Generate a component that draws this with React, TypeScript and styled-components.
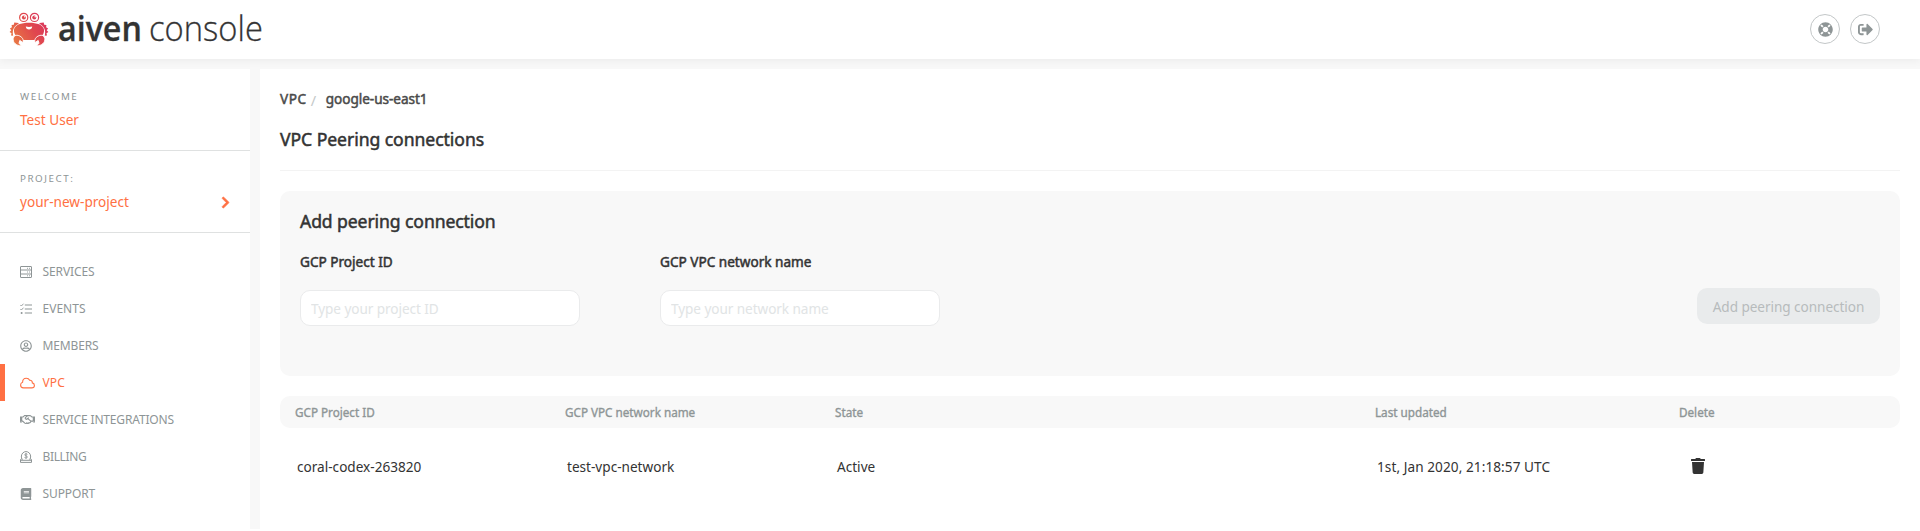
import React from 'react';
import styled, { createGlobalStyle, css } from 'styled-components';
import {
  FaBook,
  FaChevronRight,
  FaLifeRing,
  FaRegHandshake,
  FaRegUserCircle,
  FaSignOutAlt,
  FaTrash,
} from 'react-icons/fa';

const ink = '#333333';
const muted = '#8e9596';
const accent = '#ff7043';
const panel = '#f8f8f8';

const GlobalStyle = createGlobalStyle`
  * { box-sizing: border-box; }
  body {
    margin: 0;
    background: #fff;
    color: ${ink};
    font-family: "Noto Sans", "Open Sans", sans-serif;
    font-size: 13.6px;
  }
`;

const semiBold = css`
  font-weight: 400;
  -webkit-text-stroke: 0.5px currentColor;
`;

const Page = styled.div`
  display: flex;
  flex-direction: column;
  height: 529px;
  background: ${panel};
`;

const Header = styled.header`
  display: flex;
  justify-content: space-between;
  align-items: center;
  height: 59px;
  margin-bottom: 10px;
  padding: 0 40px 1px 9px;
  background: #fff;
  box-shadow: 0 2px 8px rgba(0, 0, 0, 0.05);
`;

const Brand = styled.div`
  display: flex;
  align-items: center;
  height: 58px;
`;

const Wordmark = styled.div`
  display: flex;
  width: 212px;
  margin: 0 0 3px 9px;
  font-family: "Open Sans", "Noto Sans", sans-serif;
  font-size: 35px;
  line-height: 48px;
  white-space: nowrap;
`;

const BrandName = styled.span`
  width: 93px;
  font-weight: 600;
  -webkit-text-stroke: 0.3px currentColor;
  transform: scaleX(0.92);
  transform-origin: left;
`;

const ProductName = styled.span`
  font-weight: 300;
  -webkit-text-stroke: 0.3px currentColor;
  transform: scaleX(0.935);
  transform-origin: left;
`;

const HeaderActions = styled.div`
  display: flex;
  gap: 10px;
`;

const RoundButton = styled.button`
  display: flex;
  align-items: center;
  justify-content: center;
  width: 30px;
  height: 30px;
  padding: 0;
  border: 1px solid #c3c7c8;
  border-radius: 50%;
  background: #fff;
  color: ${muted};
  font-size: 15px;
`;

const Body = styled.div`
  display: flex;
  flex: 1;
  gap: 10px;
  min-height: 0;
`;

const Sidebar = styled.aside`
  width: 250px;
  background: #fff;
`;

const SideBlock = styled.section`
  height: 82px;
  padding: 18px 20px 0;
  border-bottom: 1px solid #dfe1e1;
`;

const SideCaption = styled.div`
  color: ${muted};
  font-size: 9.8px;
  line-height: 20px;
  letter-spacing: 1.55px;
`;

const SideValue = styled.div`
  display: flex;
  align-items: center;
  justify-content: space-between;
  padding-top: 2px;
  color: ${accent};
  line-height: 22px;
  svg {
    margin-right: -2px;
    stroke: currentColor;
    stroke-width: 26px;
  }
`;

const Nav = styled.nav`
  padding-top: 20px;
`;

const NavItem = styled.a<{ $active?: boolean; $spacing: number }>`
  display: flex;
  align-items: center;
  height: 37px;
  padding-left: ${(p) => (p.$active ? 15 : 20)}px;
  border-left: ${(p) => (p.$active ? `5px solid ${accent}` : '0')};
  color: ${(p) => (p.$active ? accent : muted)};
  font-size: 12px;
  letter-spacing: ${(p) => p.$spacing}px;
`;

const NavIcon = styled.span`
  display: flex;
  width: 22.5px;
`;

const Main = styled.main`
  flex: 1;
  padding: 20px 20px 0;
  background: #fff;
`;

const Breadcrumb = styled.div`
  display: flex;
  height: 20px;
  color: #4a4a4a;
  line-height: 20px;
`;

const Crumb = styled.span`
  ${semiBold}
  &:first-child { letter-spacing: 0.6px; }
  &:last-child { letter-spacing: -0.05px; }
`;

const Separator = styled.span`
  width: 15px;
  margin: 1px 0 0 4px;
  color: #c4c8c8;
  font-size: 14.5px;
`;

const Title = styled.h1`
  ${semiBold}
  height: 62px;
  margin: 0 0 20px;
  padding-top: 17px;
  border-bottom: 1px solid #f3f3f3;
  font-size: 17.6px;
  line-height: 27px;
  letter-spacing: -0.06px;
`;

const Panel = styled.section`
  height: 185px;
  padding: 17px 20px 0;
  border-radius: 10px;
  background: ${panel};
`;

const PanelTitle = styled.h2`
  ${semiBold}
  margin: 0 0 15px;
  font-size: 17.6px;
  line-height: 27px;
  letter-spacing: -0.1px;
`;

const Form = styled.form`
  display: flex;
  gap: 80px;
`;

const Field = styled.label`
  display: block;
  width: 280px;
`;

const FieldLabel = styled.div`
  ${semiBold}
  margin-bottom: 17px;
  padding-top: 1px;
  line-height: 22px;
`;

const Input = styled.input`
  display: block;
  width: 280px;
  height: 36px;
  padding: 0 10px;
  border: 1px solid #eaebec;
  border-radius: 10px;
  background: #fff;
  font: inherit;
  letter-spacing: -0.07px;
  &::placeholder { color: #e1e4e5; opacity: 1; }
`;

const SubmitButton = styled.button`
  width: 183px;
  height: 36px;
  margin: 38px 0 0 auto;
  padding: 0;
  border: 0;
  border-radius: 10px;
  background: #e9ebec;
  color: #b7bbbc;
  font: inherit;
  letter-spacing: -0.06px;
`;

const columns = css`
  display: grid;
  grid-template-columns: 270px 270px 540px 304px 1fr;
  align-items: center;
`;

const TableHead = styled.div`
  ${columns}
  ${semiBold}
  -webkit-text-stroke-width: 0.35px;
  height: 32px;
  margin-top: 20px;
  padding-left: 15px;
  border-radius: 10px;
  background: ${panel};
  color: ${muted};
  font-size: 11.7px;
`;

const TableRow = styled.div`
  ${columns}
  height: 76px;
  padding-left: 17px;
`;

const DateCell = styled.span`
  letter-spacing: 0.07px;
`;

const DeleteCell = styled.span`
  display: flex;
  padding-left: 8.5px;
  font-size: 16px;
`;

const CrabLogo = () => (
  <svg width="40" height="34" viewBox="0 0 40 34">
    <defs>
      <linearGradient id="crab" x1="0" y1="34" x2="40" y2="8" gradientUnits="userSpaceOnUse">
        <stop offset="0.1" stopColor="#e97b43" />
        <stop offset="0.6" stopColor="#e0484e" />
        <stop offset="1" stopColor="#d93262" />
      </linearGradient>
    </defs>
    <g fill="none" stroke="url(#crab)" strokeWidth="1.2">
      <circle cx="14.7" cy="5.4" r="4.1" />
      <circle cx="25.5" cy="5.4" r="4.1" />
    </g>
    <g fill="url(#crab)">
      <circle cx="14.9" cy="5.5" r="2" />
      <circle cx="25.3" cy="5.5" r="2" />
      <path d="M20 10.8C28 10.8 34 12.8 35 17.4C35.6 21.7 32 26 27 28H13C8 26 4.4 21.7 5 17.4C6 12.8 12 10.8 20 10.8Z" />
      <path d="M9.5 11L5.3 10.6L4.8 12.7L2.6 13.1L2.9 15.3L0.9 16.5L2.3 18.3L0.6 20L2.5 21.3L2 23.6L4.2 23.8C3.2 19 3.8 15 9.5 11.8Z" />
      <path d="M30.5 11L34.7 10.6L35.2 12.7L37.4 13.1L37.1 15.3L39.1 16.5L37.7 18.3L39.4 20L37.5 21.3L38 23.6L35.8 23.8C36.8 19 36.2 15 30.5 11.8Z" />
    </g>
    <g fill="url(#crab)" stroke="#fff" strokeWidth="0.9">
      <path d="M12.4 33.8C7 33.9 3.6 30.2 4.2 26.5C4.7 23.6 7.2 22.6 9.8 23.6C13 24.8 15 27.4 13.9 30.5L10.8 28.4L10 31.2Z" />
      <path d="M27.6 33.8C33 33.9 36.4 30.2 35.8 26.5C35.3 23.6 32.8 22.6 30.2 23.6C27 24.8 25 27.4 26.1 30.5L29.2 28.4L30 31.2Z" />
    </g>
    <path d="M16.8 14.6C19 15.2 21 15.2 23.2 14.6C23 16.8 21.8 17.6 20 17.6C18.2 17.6 17 16.8 16.8 14.6Z" fill="#fff" />
    <circle cx="15.8" cy="4.7" r="0.8" fill="#fff" />
    <circle cx="26.2" cy="4.7" r="0.8" fill="#fff" />
  </svg>
);

const ServerIcon = () => (
  <svg width="12" height="12" viewBox="0 0 12 12" fill="none" stroke="currentColor">
    <rect x="0.5" y="0.5" width="11" height="11" rx="0.4" />
    <path d="M0.5 4H11.5M0.5 8H11.5" />
    <path d="M7 2.3H8M9 2.3H10M7 6H8M9 6H10M7 9.8H8M9 9.8H10" strokeWidth="0.9" />
  </svg>
);

const TasksIcon = () => (
  <svg width="12" height="12" viewBox="0 0 12 12" fill="none" stroke="currentColor">
    <path d="M4.8 2H12M4.8 6H12M4.8 10H12" strokeWidth="1.1" />
    <path d="M0.3 1.9L1.4 3L3.5 0.7M0.3 5.9L1.4 7L3.5 4.7" strokeWidth="0.9" />
    <circle cx="1.6" cy="10" r="1" fill="currentColor" stroke="none" />
  </svg>
);

const CloudIcon = () => (
  <svg width="15" height="12" viewBox="0 0 15 12" fill="none" stroke="currentColor" strokeWidth="1.1">
    <path d="M3.4 10.9H11.8C13.4 10.9 14.4 9.8 14.4 8.4C14.4 7.1 13.5 6.1 12.3 5.9C12.5 4.2 11.2 3 9.7 3.3C9 1.9 7.7 1.2 6.3 1.2C4.1 1.2 2.6 2.9 2.6 5.2C1.3 5.6 0.6 6.7 0.6 8C0.6 9.6 1.8 10.9 3.4 10.9Z" />
  </svg>
);

const BillingIcon = () => (
  <svg width="12" height="12" viewBox="0 0 12 12" fill="none" stroke="currentColor">
    <path d="M2.6 8.6C1.6 7.6 1.3 6.4 1.4 5C1.6 2.5 3.6 0.6 6 0.6C8.4 0.6 10.4 2.5 10.6 5C10.7 6.4 10.4 7.6 9.4 8.6" />
    <path d="M7.4 3.3C6.6 2.7 4.7 2.7 4.7 3.9C4.7 5.1 7.4 4.6 7.4 6C7.4 7.2 5.3 7.2 4.5 6.5M6 2V7.8" strokeWidth="0.9" />
    <path d="M2 7.8H1.2L0.5 9V11.4H11.5V9L10.8 7.8H10M0.5 9.3H11.5" />
  </svg>
);

const navItems = [
  { label: 'SERVICES', icon: <ServerIcon />, spacing: -0.1 },
  { label: 'EVENTS', icon: <TasksIcon />, spacing: 0.02 },
  { label: 'MEMBERS', icon: <FaRegUserCircle />, spacing: -0.14 },
  { label: 'VPC', icon: <CloudIcon />, spacing: 0.15, active: true },
  { label: 'SERVICE INTEGRATIONS', icon: <FaRegHandshake size={15} />, spacing: -0.17 },
  { label: 'BILLING', icon: <BillingIcon />, spacing: -0.35 },
  { label: 'SUPPORT', icon: <FaBook />, spacing: -0.1 },
];

export default function App() {
  return (
    <>
      <GlobalStyle />
      <Page>
        <Header>
          <Brand>
            <CrabLogo />
            <Wordmark>
              <BrandName>aiven</BrandName>
              <ProductName>console</ProductName>
            </Wordmark>
          </Brand>
          <HeaderActions>
            <RoundButton aria-label="Help"><FaLifeRing /></RoundButton>
            <RoundButton aria-label="Log out"><FaSignOutAlt /></RoundButton>
          </HeaderActions>
        </Header>
        <Body>
          <Sidebar>
            <SideBlock>
              <SideCaption>WELCOME</SideCaption>
              <SideValue>Test User</SideValue>
            </SideBlock>
            <SideBlock>
              <SideCaption>PROJECT:</SideCaption>
              <SideValue>your-new-project<FaChevronRight size={13} /></SideValue>
            </SideBlock>
            <Nav>
              {navItems.map((item) => (
                <NavItem key={item.label} $active={item.active} $spacing={item.spacing}>
                  <NavIcon>{item.icon}</NavIcon>
                  {item.label}
                </NavItem>
              ))}
            </Nav>
          </Sidebar>
          <Main>
            <Breadcrumb>
              <Crumb>VPC</Crumb>
              <Separator>/</Separator>
              <Crumb>google-us-east1</Crumb>
            </Breadcrumb>
            <Title>VPC Peering connections</Title>
            <Panel>
              <PanelTitle>Add peering connection</PanelTitle>
              <Form>
                <Field>
                  <FieldLabel>GCP Project ID</FieldLabel>
                  <Input placeholder="Type your project ID" />
                </Field>
                <Field>
                  <FieldLabel>GCP VPC network name</FieldLabel>
                  <Input placeholder="Type your network name" />
                </Field>
                <SubmitButton type="button">Add peering connection</SubmitButton>
              </Form>
            </Panel>
            <TableHead>
              <span>GCP Project ID</span>
              <span>GCP VPC network name</span>
              <span>State</span>
              <span>Last updated</span>
              <span>Delete</span>
            </TableHead>
            <TableRow>
              <span>coral-codex-263820</span>
              <span>test-vpc-network</span>
              <span>Active</span>
              <DateCell>1st, Jan 2020, 21:18:57 UTC</DateCell>
              <DeleteCell><FaTrash /></DeleteCell>
            </TableRow>
          </Main>
        </Body>
      </Page>
    </>
  );
}
